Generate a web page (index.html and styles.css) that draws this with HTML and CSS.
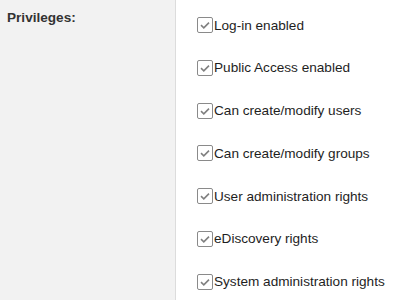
FILE: index.html
```html
<!DOCTYPE html>
<html>
<head>
<meta charset="utf-8">
<link rel="stylesheet" href="styles.css">
</head>
<body>
<div class="row">
  <div class="label-col">Privileges:</div>
  <div class="opts">
    <div class="opt"><span class="cb"><svg viewBox="0 0 14 14"><path d="M3 7.2 L5.8 9.8 L11 4.6" fill="none" stroke="#808080" stroke-width="1.6"/></svg></span><span>Log-in enabled</span></div>
    <div class="opt"><span class="cb"><svg viewBox="0 0 14 14"><path d="M3 7.2 L5.8 9.8 L11 4.6" fill="none" stroke="#808080" stroke-width="1.6"/></svg></span><span>Public Access enabled</span></div>
    <div class="opt"><span class="cb"><svg viewBox="0 0 14 14"><path d="M3 7.2 L5.8 9.8 L11 4.6" fill="none" stroke="#808080" stroke-width="1.6"/></svg></span><span>Can create/modify users</span></div>
    <div class="opt"><span class="cb"><svg viewBox="0 0 14 14"><path d="M3 7.2 L5.8 9.8 L11 4.6" fill="none" stroke="#808080" stroke-width="1.6"/></svg></span><span>Can create/modify groups</span></div>
    <div class="opt"><span class="cb"><svg viewBox="0 0 14 14"><path d="M3 7.2 L5.8 9.8 L11 4.6" fill="none" stroke="#808080" stroke-width="1.6"/></svg></span><span>User administration rights</span></div>
    <div class="opt"><span class="cb"><svg viewBox="0 0 14 14"><path d="M3 7.2 L5.8 9.8 L11 4.6" fill="none" stroke="#808080" stroke-width="1.6"/></svg></span><span>eDiscovery rights</span></div>
    <div class="opt"><span class="cb"><svg viewBox="0 0 14 14"><path d="M3 7.2 L5.8 9.8 L11 4.6" fill="none" stroke="#808080" stroke-width="1.6"/></svg></span><span>System administration rights</span></div>
  </div>
</div>
</body>
</html>
```
FILE: styles.css
```css
html, body {
  margin: 0;
  padding: 0;
  background: #fff;
  font-family: "Liberation Sans", Arial, sans-serif;
  font-size: 13.6px;
  color: #1e1e1e;
}
.row {
  display: flex;
  height: 300px;
}
.label-col {
  width: 168px;
  padding: 10px 0 0 7px;
  background: #f2f2f2;
  border-right: 1px solid #dcdcdc;
  font-weight: bold;
  color: #333;
}
.opts {
  display: flex;
  flex-direction: column;
  gap: 26.8px;
  padding: 17px 0 0 21px;
}
.opt {
  display: flex;
  align-items: center;
  height: 16px;
}
.cb {
  width: 14px;
  height: 14px;
  border: 1px solid #8a8a8a;
  border-radius: 2px;
  background: #fff;
  display: flex;
  margin-right: 1px;
}
.cb svg {
  width: 14px;
  height: 14px;
}
```
